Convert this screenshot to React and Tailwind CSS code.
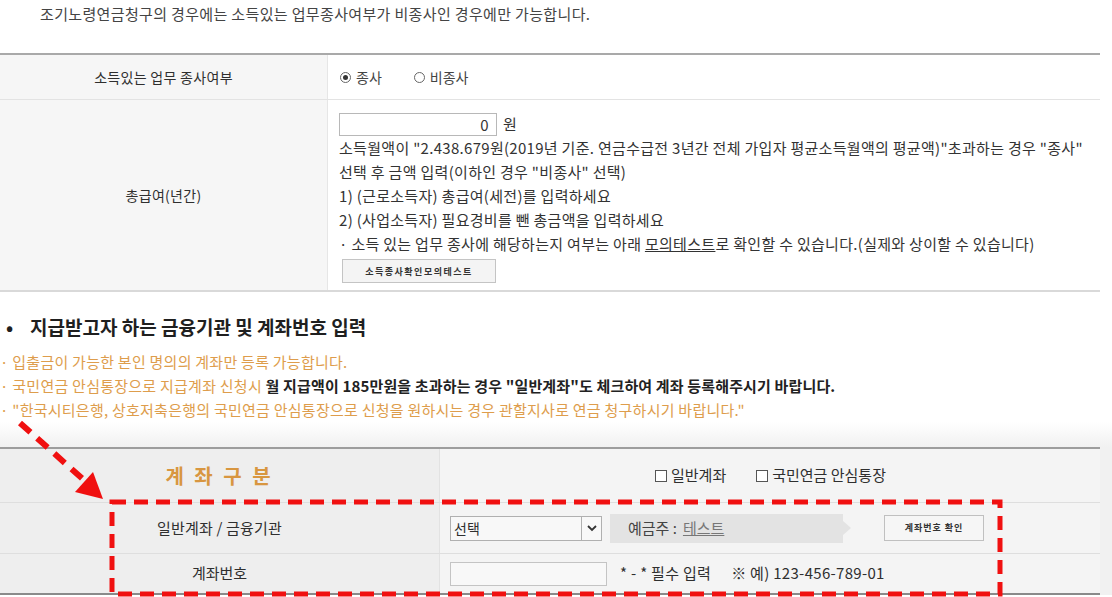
export default function App() {
  const Radio = ({ checked }) => (
    <span className="flex h-[11px] w-[11px] items-center justify-center rounded-full border border-[#666] bg-white">
      {checked && <span className="h-[5px] w-[5px] rounded-full bg-[#333]" />}
    </span>
  );
  const Check = () => <span className="inline-block h-[12px] w-[12px] border border-[#555] bg-white" />;

  return (
    <div className="relative h-[597px] w-[1112px] overflow-hidden bg-white font-['Noto_Sans_CJK_KR',sans-serif] text-[#333]">
      <p className="pl-[40px] pt-[4px] text-[15px] leading-[20px] tracking-[0.35px] text-[#444]">
        조기노령연금청구의 경우에는 소득있는 업무종사여부가 비종사인 경우에만 가능합니다.
      </p>

      {/* table 1 */}
      <div className="mt-[29px] w-[1100px] border-t-2 border-[#a9a9a9]">
        <div className="grid h-[45px] grid-cols-[328px_1fr] border-b border-[#e3e3e3]">
          <div className="flex items-center justify-center border-r border-[#e6e6e6] bg-[#f6f6f6] text-[14px] tracking-[0.3px] text-[#2f2f2f]">
            소득있는 업무 종사여부
          </div>
          <div className="flex items-center gap-[32px] pl-[12px] text-[14px] text-[#444]">
            <span className="flex items-center gap-[5px]">
              <Radio checked />
              종사
            </span>
            <span className="flex items-center gap-[5px]">
              <Radio />
              비종사
            </span>
          </div>
        </div>
        <div className="grid h-[192px] grid-cols-[328px_1fr] border-b-2 border-[#d9d9d9]">
          <div className="flex items-center justify-center border-r border-[#e6e6e6] bg-[#f6f6f6] text-[14px] tracking-[0.3px] text-[#2f2f2f]">
            총급여(년간)
          </div>
          <div className="pl-[11px] pt-[12px] text-[15px] leading-[24px] tracking-[0.3px] text-[#333]">
            <div className="flex items-center gap-[6px]">
              <div className="h-[23px] w-[158px] border border-[#b8b8b8] pr-[7px] text-right text-[15px] leading-[21px]">0</div>
              <span>원</span>
            </div>
            <p className="whitespace-nowrap">소득월액이 "2.438.679원(2019년 기준. 연금수급전 3년간 전체 가입자 평균소득월액의 평균액)"초과하는 경우 "종사"</p>
            <p>선택 후 금액 입력(이하인 경우 "비종사" 선택)</p>
            <p>1) (근로소득자) 총급여(세전)를 입력하세요</p>
            <p>2) (사업소득자) 필요경비를 뺀 총금액을 입력하세요</p>
            <p className="whitespace-nowrap">
              · 소득 있는 업무 종사에 해당하는지 여부는 아래 <span className="underline">모의테스트</span>로 확인할 수 있습니다.(실제와 상이할 수 있습니다)
            </p>
            <button className="ml-[3px] mt-[3px] flex h-[24px] w-[154px] items-center justify-center border border-[#c4c4c4] bg-[#f4f4f4] text-[9px] font-bold leading-none tracking-[1.5px] text-[#333]">
              소득종사확인모의테스트
            </button>
          </div>
        </div>
      </div>

      {/* heading */}
      <h2 className="mt-[23px] flex items-center text-[19px] font-bold leading-[24px] text-[#1f1f1f]">
        <span className="w-[30px] pl-[6px]">•</span>
        지급받고자 하는 금융기관 및 계좌번호 입력
      </h2>
      <div className="mt-[11px] whitespace-nowrap text-[15px] leading-[24px] tracking-[0.25px] text-[#de9d4c]">
        <p>· 입출금이 가능한 본인 명의의 계좌만 등록 가능합니다.</p>
        <p>
          · 국민연금 안심통장으로 지급계좌 신청시{" "}
          <span className="font-bold tracking-[0.15px] text-[#222]">월 지급액이 185만원을 초과하는 경우 "일반계좌"도 체크하여 계좌 등록해주시기 바랍니다.</span>
        </p>
        <p>· "한국시티은행, 상호저축은행의 국민연금 안심통장으로 신청을 원하시는 경우 관할지사로 연금 청구하시기 바랍니다."</p>
      </div>

      {/* bottom area */}
      <div className="h-[25px] bg-linear-to-b from-white to-[#f1f1f1]" />
      <div className="bg-[#f1f1f1]">
        <div className="w-[1100px] border-t-2 border-[#9d9d9d] text-[15px] text-[#2f2f2f]">
          <div className="grid h-[54px] grid-cols-[440px_1fr] border-b border-[#dedede]">
            <div className="flex items-center justify-center border-r border-[#e2e2e2] bg-[#eeeeee] text-[20px] font-bold tracking-[3px] text-[#d89640]">
              계 좌 구 분
            </div>
            <div className="flex items-center gap-[30px] bg-[#f4f4f4] pl-[215px]">
              <span className="flex items-center gap-[4px]">
                <Check />
                일반계좌
              </span>
              <span className="flex items-center gap-[4px]">
                <Check />
                국민연금 안심통장
              </span>
            </div>
          </div>
          <div className="grid h-[51px] grid-cols-[440px_1fr] border-b border-[#dedede]">
            <div className="flex items-center justify-center border-r border-[#e2e2e2] bg-[#eeeeee] tracking-[0.2px]">일반계좌 / 금융기관</div>
            <div className="flex items-center bg-[#f4f4f4] pl-[10px]">
              <div className="flex h-[25px] w-[152px] items-center border border-[#b0b0b0] bg-[#f8f8f8]">
                <span className="flex-1 pl-[3px] text-[14px]">선택</span>
                <span className="flex h-full w-[20px] items-center justify-center border-l border-[#b0b0b0]">
                  <svg width="10" height="7" viewBox="0 0 10 7">
                    <polyline points="1,1 5,5 9,1" fill="none" stroke="#333" strokeWidth="1.8" />
                  </svg>
                </span>
              </div>
              <div className="ml-[8px] flex items-center">
                <div className="flex h-[29px] w-[233px] items-center bg-[#e3e3e3] pl-[18px] text-[15px] text-[#444]">
                  예금주 : <span className="ml-[6px] text-[#777] underline">테스트</span>
                </div>
                <div className="h-0 w-0 border-y-[7px] border-l-[8px] border-y-transparent border-l-[#e3e3e3]" />
              </div>
              <button className="ml-[33px] flex h-[26px] w-[100px] items-center justify-center border border-[#c0c0c0] bg-[#f6f6f6] text-[9px] font-bold tracking-[1px] text-[#333]">
                계좌번호 확인
              </button>
            </div>
          </div>
          <div className="grid h-[41px] grid-cols-[440px_1fr] border-b-2 border-[#8a8a8a]">
            <div className="flex items-center justify-center border-r border-[#e2e2e2] bg-[#eeeeee]">계좌번호</div>
            <div className="flex items-center bg-[#f4f4f4] pl-[10px] tracking-[0.3px]">
              <div className="h-[24px] w-[157px] border border-[#c4c4c4] bg-[#f8f8f8]" />
              <span className="ml-[13px]">* - * 필수 입력</span>
              <span className="ml-[20px]">※ 예) 123-456-789-01</span>
            </div>
          </div>
        </div>
      </div>

      {/* red annotation overlay */}
      <svg className="pointer-events-none absolute left-0 top-0" width="1112" height="597" viewBox="0 0 1112 597">
        <rect x="112" y="502" width="888" height="92" fill="none" stroke="#f01010" strokeWidth="5" strokeDasharray="14 8" />
        <line x1="20" y1="423" x2="84" y2="480" stroke="#f01010" strokeWidth="6" strokeDasharray="14 9" />
        <polygon points="75,492 93,472 103,499" fill="#f01010" />
      </svg>
    </div>
  );
}
